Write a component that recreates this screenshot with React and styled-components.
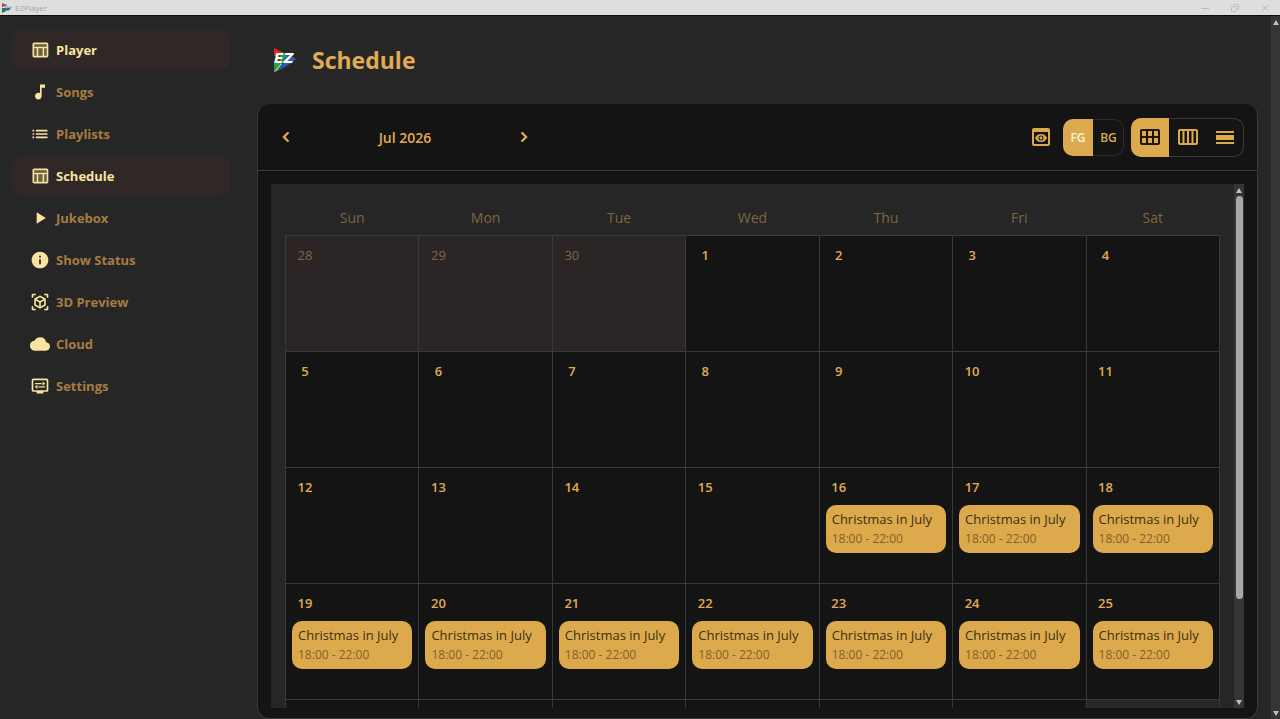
import React from "react";
import styled, { createGlobalStyle } from "styled-components";
import {
  MdMusicNote,
  MdList,
  MdPlayArrow,
  MdInfo,
  MdViewInAr,
  MdCloud,
  MdDisplaySettings,
  MdPreview,
  MdOutlineCalendarViewMonth,
  MdCalendarViewWeek,
  MdCalendarViewDay,
  MdChevronLeft,
  MdChevronRight,
} from "react-icons/md";

const c = {
  page: "#262626",
  panel: "#141414",
  line: "#3a3a3a",
  gold: "#dcaa4c",
  goldText: "#e0ab52",
  dim: "#a67c42",
  faint: "#80653e",
  cream: "#fae3a0",
  raised: "#302827",
  outside: "#2b2625",
};

const Global = createGlobalStyle`
  * { box-sizing: border-box; }
  body {
    margin: 0;
    background: ${c.page};
    font-family: "Segoe UI", "Open Sans", "Noto Sans", sans-serif;
    color: ${c.goldText};
  }
  button { font: inherit; color: inherit; background: none; border: 0; padding: 0; cursor: pointer; }
`;

const Window = styled.div`
  display: flex;
  flex-direction: column;
  height: 100vh;
  overflow: hidden;
`;

const TitleBar = styled.div`
  display: flex;
  align-items: center;
  flex: none;
  height: 16px;
  padding-left: 2px;
  gap: 3px;
  background: #dedede;
  border-bottom: 1px solid #0c0c0c;
  color: #a6a6a6;
  font-size: 8px;
  line-height: 15px;
`;

const WindowControls = styled.div`
  display: flex;
  margin-left: auto;
`;

const WindowButton = styled.button`
  display: flex;
  align-items: center;
  justify-content: center;
  width: 30px;
  height: 15px;
  color: #bcbcbc;
`;

const Body = styled.div`
  display: flex;
  flex: 1;
  min-height: 0;
`;

const Sidebar = styled.nav`
  display: flex;
  flex-direction: column;
  flex: none;
  gap: 2px;
  width: 257px;
  padding: 14px 27px 14px 12px;
`;

const NavLink = styled.a`
  display: flex;
  align-items: center;
  gap: 6px;
  height: 40px;
  padding-left: 18px;
  border-radius: 10px;
  background: ${(p) => (p.$active ? c.raised : "transparent")};
  color: ${(p) => (p.$active ? c.cream : c.dim)};
  font-size: 13px;
  font-weight: 700;
  text-decoration: none;

  svg { color: ${c.cream}; }
`;

const Main = styled.main`
  display: flex;
  flex-direction: column;
  flex: 1;
  min-width: 0;
  padding-right: 13px;
`;

const Header = styled.header`
  display: flex;
  align-items: center;
  flex: none;
  gap: 15px;
  height: 88px;
  padding-left: 16px;
`;

const Heading = styled.h1`
  margin: 0;
  font-size: 23px;
  line-height: 32px;
  font-weight: 700;
`;

const Panel = styled.section`
  display: flex;
  flex-direction: column;
  flex: 1;
  min-height: 0;
  background: ${c.panel};
  border: 1px solid ${c.line};
  border-top: 0;
  border-radius: 12px;
`;

const Toolbar = styled.div`
  display: flex;
  align-items: center;
  justify-content: space-between;
  flex: none;
  height: 67px;
  padding: 0 13px 0 18px;
  border-bottom: 1px solid ${c.line};
`;

const MonthNav = styled.div`
  display: flex;
  align-items: center;
  justify-content: space-between;
  width: 258px;
`;

const MonthTitle = styled.h2`
  margin: 0;
  font-size: 14px;
  font-weight: 600;
`;

const IconButton = styled.button`
  display: flex;
  align-items: center;
  justify-content: center;
  width: 20px;
  height: 24px;
  color: ${c.gold};
`;

const StepButton = styled(IconButton)`
  path:not([fill="none"]) { stroke: currentColor; stroke-width: 1; }
  path[fill="none"] { stroke: none; }
`;

const Tools = styled.div`
  display: flex;
  align-items: center;
  gap: 7px;
`;

const PreviewButton = styled(IconButton)`
  width: 30px;
`;

const Group = styled.div`
  display: flex;
  overflow: hidden;
  height: ${(p) => (p.$large ? 39 : 37)}px;
  border-radius: 10px;
  box-shadow: inset 0 0 0 1px ${(p) => (p.$large ? c.line : "#2c2c2c")};
`;

const Toggle = styled.button`
  display: flex;
  align-items: center;
  justify-content: center;
  width: ${(p) => p.$width}px;
  background: ${(p) => (p.$on ? c.gold : "transparent")};
  color: ${(p) => (p.$on ? p.$ink : c.gold)};
  font-size: 12px;
  font-weight: 600;
`;

const Content = styled.div`
  display: flex;
  flex: 1;
  min-height: 0;
  margin: 13px 13px 10px;
  background: ${c.page};
`;

const CalendarArea = styled.div`
  flex: 1;
  min-width: 0;
  overflow: hidden;
  padding: 14px 14px 0;
`;

const Track = styled.div`
  display: flex;
  flex-direction: column;
  align-items: center;
  flex: none;
  width: ${(p) => p.$width}px;
  padding: 4px 0 3px;
  gap: 3px;
  background: #353535;
`;

const Thumb = styled.div`
  width: 7px;
  height: 78%;
  border-radius: 4px;
  background: #a8a8a8;
`;

const Arrow = styled.span`
  width: 0;
  height: 0;
  border: 3px solid transparent;
  border-top-width: ${(p) => (p.$down ? 5 : 0)}px;
  border-bottom-width: ${(p) => (p.$down ? 0 : 5)}px;
  border-top-color: ${(p) => (p.$down ? "#c0c0c0" : "transparent")};
  border-bottom-color: ${(p) => (p.$down ? "transparent" : "#c0c0c0")};
  margin-top: ${(p) => (p.$down ? "auto" : 0)};
`;

const Calendar = styled.table`
  width: 100%;
  table-layout: fixed;
  border-collapse: collapse;
`;

const Weekday = styled.th`
  height: 37px;
  padding: 2px 0 0;
  color: ${c.faint};
  font-size: 14px;
  font-weight: 400;
`;

const Day = styled.td`
  height: 116px;
  padding: 6px;
  vertical-align: top;
  border: 1px solid ${c.line};
  background: ${(p) => (p.$outside ? c.outside : c.panel)};
  color: ${(p) => (p.$outside ? c.faint : c.goldText)};
`;

const DayNumber = styled.time`
  display: block;
  width: 26px;
  height: 31px;
  font-size: 13px;
  line-height: 27px;
  font-weight: ${(p) => (p.$outside ? 400 : 600)};
  text-align: center;
`;

const Event = styled.button`
  display: block;
  width: 100%;
  height: 48px;
  padding: 0 6px;
  border-radius: 10px;
  background: ${c.gold};
  color: #3d2e14;
  font-size: 13px;
  line-height: 20px;
  text-align: left;
  white-space: nowrap;
  overflow: hidden;
`;

const EventTime = styled.span`
  display: block;
  color: #80612b;
  font-size: 12px;
`;

function Logo({ size }) {
  return (
    <svg width={size} height={size} viewBox="0 0 24 24" aria-hidden="true">
      <path d="M1 0 L13 6 L1 8 Z" fill="#e5241c" />
      <path d="M8 4 L14 6 L10 15 L6 15 Z" fill="#2c9c3e" />
      <path d="M13 6 L23 11 L17 16 L10 15 Z" fill="#2c62c8" />
      <path d="M1 13 L10 13 L6 19 L1 24 Z" fill="#2c9c3e" />
      <path d="M5 23 L11 13 L19 14 L14 18 Z" fill="#2458b8" />
      <path d="M1 24 L8 15 L9 16 L4 23 Z" fill="#8ed0a0" />
      <text
        x="1"
        y="15"
        fontFamily="DejaVu Sans, sans-serif"
        fontSize="14"
        fontWeight="700"
        fontStyle="italic"
        fill="#ffffff"
      >
        EZ
      </text>
    </svg>
  );
}

function MiniLogo() {
  return (
    <svg width="10" height="10" viewBox="0 0 10 10" aria-hidden="true">
      <path d="M0 0 L5 2 L4 4 L0 4 Z" fill="#b8453f" />
      <path d="M0 5 L5 4 L4 8 L0 10 Z" fill="#28735a" />
      <path d="M4 7 L5 3 L10 4 L6 8 Z" fill="#2d68a4" />
      <path d="M1 4 H9" stroke="#ffffff" strokeWidth="1" />
    </svg>
  );
}

function TableIcon({ size }) {
  return (
    <svg width={size} height={size} viewBox="0 0 24 24" fill="currentColor" aria-hidden="true">
      <path opacity="0.3" d="M5 10h3v9H5zM10 10h5v9h-5zM17 10h3v9h-3zM5 5h15v3H5z" />
      <path d="M20 3H5c-1.100 0-2 .9-2 2v14c0 1.100.9 2 2 2h15c1.100 0 2-.9 2-2V5c0-1.100-.9-2-2-2zm0 2v3H5V5h15zm-5 14h-5v-9h5v9zM5 10h3v9H5v-9zm12 9v-9h3v9h-3z" />
    </svg>
  );
}

const nav = [
  ["Player", TableIcon, true],
  ["Songs", MdMusicNote],
  ["Playlists", MdList],
  ["Schedule", TableIcon, true],
  ["Jukebox", MdPlayArrow],
  ["Show Status", MdInfo],
  ["3D Preview", MdViewInAr],
  ["Cloud", MdCloud],
  ["Settings", MdDisplaySettings],
];

const weekdays = ["Sun", "Mon", "Tue", "Wed", "Thu", "Fri", "Sat"];

const weeks = [0, 1, 2, 3].map((w) =>
  weekdays.map((_, d) => {
    const n = w * 7 + d - 2;
    return n < 1 ? { day: n + 30, outside: true } : { day: n, event: n >= 16 };
  })
);

export default function App() {
  return (
    <Window>
      <Global />
      <TitleBar>
        <MiniLogo />
        EZPlayer
        <WindowControls>
          <WindowButton aria-label="Minimize">
            <svg width="8" height="8" viewBox="0 0 8 8" stroke="currentColor"><path d="M0 4.5H8" /></svg>
          </WindowButton>
          <WindowButton aria-label="Restore">
            <svg width="8" height="8" viewBox="0 0 8 8" fill="none" stroke="currentColor">
              <rect x="0.5" y="2.5" width="5" height="5" rx="1" />
              <path d="M2.5 0.5H6a1.5 1.5 0 0 1 1.5 1.5V5.5" />
            </svg>
          </WindowButton>
          <WindowButton aria-label="Close">
            <svg width="8" height="8" viewBox="0 0 8 8" stroke="currentColor"><path d="M1 1L7 7M7 1L1 7" /></svg>
          </WindowButton>
        </WindowControls>
      </TitleBar>
      <Body>
        <Sidebar>
          {nav.map(([label, Icon, active]) => (
            <NavLink key={label} href="#" $active={active}>
              <Icon size={20} />
              {label}
            </NavLink>
          ))}
        </Sidebar>
        <Main>
          <Header>
            <Logo size={24} />
            <Heading>Schedule</Heading>
          </Header>
          <Panel>
            <Toolbar>
              <MonthNav>
                <StepButton aria-label="Previous month"><MdChevronLeft size={20} /></StepButton>
                <MonthTitle>Jul 2026</MonthTitle>
                <StepButton aria-label="Next month"><MdChevronRight size={20} /></StepButton>
              </MonthNav>
              <Tools>
                <PreviewButton aria-label="Preview"><MdPreview size={24} /></PreviewButton>
                <Group>
                  <Toggle $on $ink="#fdf3dc" $width={30}>FG</Toggle>
                  <Toggle $width={31}>BG</Toggle>
                </Group>
                <Group $large>
                  <Toggle $on $ink="#1c160a" $width={38} aria-label="Month view"><MdOutlineCalendarViewMonth size={24} /></Toggle>
                  <Toggle $width={37} aria-label="Week view"><MdCalendarViewWeek size={24} /></Toggle>
                  <Toggle $width={38} aria-label="Day view"><MdCalendarViewDay size={24} /></Toggle>
                </Group>
              </Tools>
            </Toolbar>
            <Content>
              <CalendarArea>
                <Calendar>
                  <thead>
                    <tr>{weekdays.map((d) => <Weekday key={d} scope="col">{d}</Weekday>)}</tr>
                  </thead>
                  <tbody>
                    {weeks.map((week, i) => (
                      <tr key={i}>
                        {week.map(({ day, outside, event }) => (
                          <Day key={day} $outside={outside}>
                            <DayNumber $outside={outside}>{day}</DayNumber>
                            {event && (
                              <Event>
                                Christmas in July
                                <EventTime>18:00 - 22:00</EventTime>
                              </Event>
                            )}
                          </Day>
                        ))}
                      </tr>
                    ))}
                    <tr>
                      {weekdays.map((d) => <Day key={d} $outside={d === "Sat"} />)}
                    </tr>
                  </tbody>
                </Calendar>
              </CalendarArea>
              <Track $width={10}>
                <Arrow />
                <Thumb />
                <Arrow $down />
              </Track>
            </Content>
          </Panel>
        </Main>
        <Track $width={9}>
          <Arrow />
          <Arrow $down />
        </Track>
      </Body>
    </Window>
  );
}
